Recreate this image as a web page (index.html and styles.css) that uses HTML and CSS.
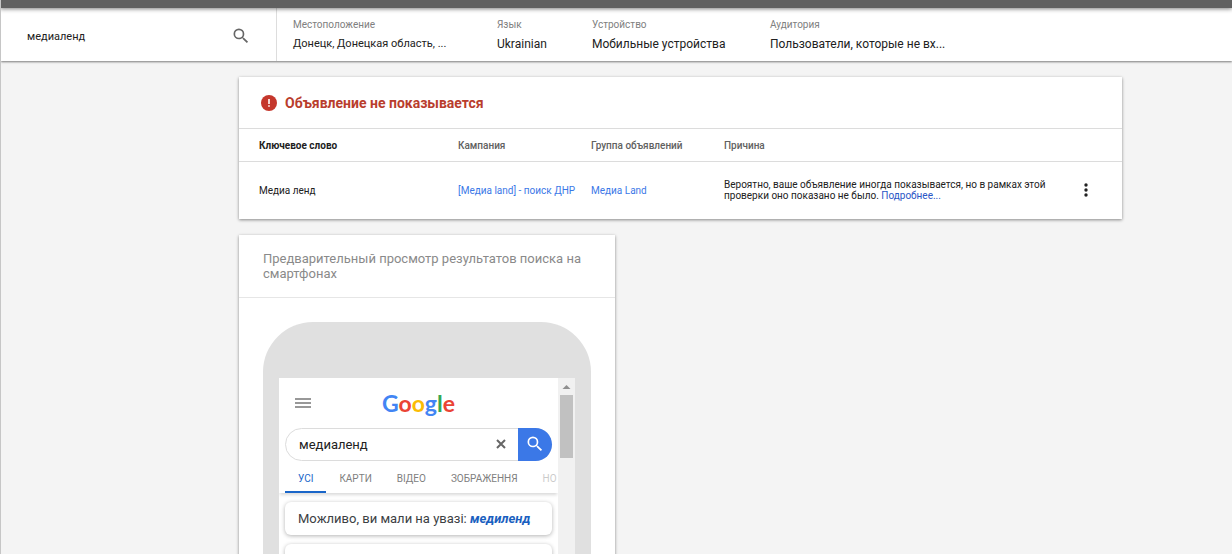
FILE: index.html
```html
<!DOCTYPE html>
<html lang="ru">
<head>
  <meta charset="UTF-8">
  <title>Предварительный просмотр и диагностика объявлений</title>
  <link rel="stylesheet" href="styles.css">
</head>
<body>
  <div class="topbar"></div>

  <header class="filters">
    <form class="query">
      <input class="query-input" type="text" value="медиаленд" aria-label="Поисковый запрос">
      <button class="icon-btn" type="button" aria-label="Найти">
        <svg viewBox="0 0 24 24" width="20" height="20"><path fill="#666" d="M15.5 14h-.79l-.28-.27A6.47 6.47 0 0 0 16 9.5 6.5 6.5 0 1 0 9.5 16c1.61 0 3.09-.59 4.23-1.57l.27.28v.79l5 4.99L20.49 19l-4.99-5zm-6 0a4.5 4.5 0 1 1 0-9 4.5 4.5 0 0 1 0 9z"/></svg>
      </button>
    </form>
    <dl class="params">
      <div class="param param-location">
        <dt>Местоположение</dt>
        <dd>Донецк, Донецкая область, ...</dd>
      </div>
      <div class="param param-lang">
        <dt>Язык</dt>
        <dd>Ukrainian</dd>
      </div>
      <div class="param param-device">
        <dt>Устройство</dt>
        <dd>Мобильные устройства</dd>
      </div>
      <div class="param param-audience">
        <dt>Аудитория</dt>
        <dd>Пользователи, которые не вх...</dd>
      </div>
    </dl>
  </header>

  <main class="content">
    <section class="card">
      <h2 class="status">
        <svg viewBox="0 0 16 16" width="16" height="16"><circle cx="8" cy="8" r="8" fill="#c5372c"/><path fill="#fff" d="M7.2 4h1.6v5H7.2zM7.2 10.2h1.6v1.6H7.2z"/></svg>
        Объявление не показывается
      </h2>
      <table class="results">
        <colgroup>
          <col class="col-keyword">
          <col class="col-campaign">
          <col class="col-group">
          <col class="col-reason">
          <col class="col-menu">
        </colgroup>
        <thead>
          <tr>
            <th class="sorted">Ключевое слово</th>
            <th>Кампания</th>
            <th>Группа объявлений</th>
            <th>Причина</th>
            <th></th>
          </tr>
        </thead>
        <tbody>
          <tr>
            <td>Медиа ленд</td>
            <td><a href="#">[Медиа land] - поиск ДНР</a></td>
            <td><a href="#">Медиа Land</a></td>
            <td>Вероятно, ваше объявление иногда показывается, но в рамках этой проверки оно показано не было. <a class="more" href="#">Подробнее...</a></td>
            <td>
              <button class="icon-btn" type="button" aria-label="Меню">
                <svg viewBox="0 0 20 20" width="20" height="20" fill="#222"><circle cx="10" cy="5" r="1.7"/><circle cx="10" cy="10" r="1.7"/><circle cx="10" cy="15" r="1.7"/></svg>
              </button>
            </td>
          </tr>
        </tbody>
      </table>
    </section>

    <section class="card preview">
      <h3 class="preview-title">Предварительный просмотр результатов поиска на смартфонах</h3>
      <div class="phone">
        <div class="screen">
          <div class="serp">
            <div class="serp-head">
              <button class="icon-btn menu" type="button" aria-label="Меню">
                <svg viewBox="0 0 16 12" width="16" height="12"><path stroke="#777" stroke-width="1.6" d="M0 2h16M0 6h16M0 10h16"/></svg>
              </button>
              <div class="logo"><span class="blue">G</span><span class="red">o</span><span class="yellow">o</span><span class="blue">g</span><span class="green">l</span><span class="red">e</span></div>
            </div>
            <form class="serp-search">
              <input class="serp-input" type="text" value="медиаленд" aria-label="Пошук">
              <button class="icon-btn clear" type="button" aria-label="Очистити">
                <svg viewBox="0 0 10 10" width="10" height="10"><path stroke="#666" stroke-width="2" d="M1 1l8 8M9 1l-8 8"/></svg>
              </button>
              <button class="icon-btn go" type="button" aria-label="Пошук">
                <svg viewBox="0 0 24 24" width="20" height="20"><path fill="#fff" d="M15.5 14h-.79l-.28-.27A6.47 6.47 0 0 0 16 9.5 6.5 6.5 0 1 0 9.5 16c1.61 0 3.09-.59 4.23-1.57l.27.28v.79l5 4.99L20.49 19l-4.99-5zm-6 0a4.5 4.5 0 1 1 0-9 4.5 4.5 0 0 1 0 9z"/></svg>
              </button>
            </form>
            <nav class="tabs">
              <a class="active" href="#">УСІ</a>
              <a href="#">КАРТИ</a>
              <a href="#">ВІДЕО</a>
              <a href="#">ЗОБРАЖЕННЯ</a>
              <a class="faded" href="#">НО</a>
            </nav>
            <div class="serp-card">Можливо, ви мали на увазі: <a href="#">медиленд</a></div>
            <div class="serp-card serp-result"></div>
          </div>
          <div class="scrollbar">
            <svg viewBox="0 0 17 17" width="17" height="17"><path fill="#8f8f8f" d="M4.500 11h8l-4-4z"/></svg>
            <div class="thumb"></div>
          </div>
        </div>
      </div>
    </section>
  </main>
</body>
</html>
```
FILE: styles.css
```css
* {
  box-sizing: border-box;
}

body {
  margin: 0;
  height: 100vh;
  overflow: hidden;
  background: #f4f4f4;
  border-left: 1px solid #c6c6c6;
  color: #212121;
  font-family: Roboto, "Liberation Sans", sans-serif;
  font-size: 10px;
}

a {
  color: #3b78e7;
  text-decoration: none;
}

svg {
  display: block;
}

input {
  border: 0;
  padding: 0;
  outline: 0;
  background: none;
  color: #212121;
  font-family: inherit;
  min-width: 0;
}

.icon-btn {
  display: flex;
  align-items: center;
  justify-content: center;
  border: 0;
  padding: 0;
  background: none;
}

/* top */
.topbar {
  height: 8px;
  margin-left: -1px;
  background: #616161;
  box-shadow: 0 1px 4px rgba(0, 0, 0, 0.5);
  position: relative;
}

.filters {
  display: flex;
  height: 53px;
  background: #fff;
  box-shadow: 0 1px 2px rgba(0, 0, 0, 0.5);
}

.query {
  display: flex;
  align-items: center;
  width: 276px;
  padding: 3px 25px 0 26px;
  border-right: 1px solid #ddd;
}

.query-input {
  flex: 1;
  font-size: 11px;
}

.params {
  display: flex;
  margin: 0;
  padding: 10px 0 0 16px;
  white-space: nowrap;
}

.param dt {
  color: #808080;
  font-size: 10px;
  line-height: 13px;
}

.param dd {
  margin: 4px 0 0;
  font-size: 12px;
  line-height: 18px;
}

.param-location {
  width: 204px;
}

.param-location dd {
  font-size: 11px;
}

.param-lang {
  width: 95px;
}

.param-device {
  width: 178px;
}

/* cards */
.content {
  padding: 16px 110px 0 238px;
}

.card {
  margin-bottom: 16px;
  background: #fff;
  box-shadow: 0 1px 3px rgba(0, 0, 0, 0.45);
}

.status {
  display: flex;
  align-items: center;
  gap: 8px;
  height: 51px;
  margin: 0;
  padding-left: 22px;
  color: #b93d2d;
  font-size: 14px;
  font-weight: 700;
}

.results {
  width: 100%;
  table-layout: fixed;
  border-collapse: collapse;
  line-height: 11px;
}

.results th,
.results td {
  padding: 0;
  border-top: 1px solid #dcdcdc;
  text-align: left;
}

.results th {
  height: 33px;
  color: #616161;
  font-weight: 500;
}

.results th.sorted {
  color: #212121;
  font-weight: 700;
}

.results td {
  height: 57px;
}

.results th:first-child,
.results td:first-child {
  padding-left: 20px;
}

.results .more {
  display: inline-block;
  color: #2a56c6;
}

.col-keyword {
  width: 219px;
}

.col-campaign,
.col-group {
  width: 133px;
}

.col-menu {
  width: 46px;
}

.results td:nth-child(4) {
  padding-right: 24px;
}

/* phone preview */
.preview {
  width: 376px;
}

.preview-title {
  margin: 0;
  padding: 16px 24px;
  border-bottom: 1px solid #e6e6e6;
  color: #8a8a8a;
  font-size: 13px;
  font-weight: 400;
  line-height: 15px;
}

.phone {
  margin: 24px;
  padding: 56px 16px;
  border-radius: 50px;
  background: #e0e0e0;
}

.screen {
  display: flex;
  height: 480px;
  background: #fff;
}

.serp {
  flex: 1;
  min-width: 0;
  overflow: hidden;
}

.serp-head {
  display: grid;
  grid-template-columns: 1fr auto 1fr;
  align-items: center;
  height: 50px;
}

.menu {
  width: 16px;
  margin-left: 16px;
}

.logo {
  font-family: Lato, Roboto, sans-serif;
  font-size: 23px;
  font-weight: 700;
  line-height: 28px;
}

.blue {
  color: #4285f4;
}

.red {
  color: #ea4335;
}

.yellow {
  color: #fbbc05;
}

.green {
  color: #34a853;
}

.serp-search {
  display: flex;
  height: 33px;
  margin: 0 6px;
  border: 1px solid #dcdcdc;
  border-radius: 17px;
}

.serp-input {
  flex: 1;
  padding-left: 13px;
  font-size: 13px;
}

.clear {
  width: 36px;
}

.go {
  width: 34px;
  margin: -1px;
  border-radius: 0 17px 17px 0;
  background: #3b78e7;
}

.tabs {
  display: flex;
  gap: 1px;
  height: 32px;
  padding-left: 6px;
  box-shadow: 0 3px 3px -1px rgba(0, 0, 0, 0.15);
}

.tabs a {
  padding: 0 12px;
  color: #808080;
  line-height: 36px;
}

.tabs .active {
  padding: 0 13px;
  border-bottom: 2px solid #1a66c9;
  color: #1a66c9;
}

.tabs .faded {
  padding-right: 0;
  opacity: 0.4;
}

.serp-card {
  height: 33px;
  margin: 9px 6px 8px;
  padding-left: 13px;
  border-radius: 6px;
  box-shadow: 0 1px 4px rgba(0, 0, 0, 0.3);
  color: #3c4043;
  font-size: 13px;
  line-height: 33px;
}

.serp-card a {
  color: #1a5fc0;
  font-style: italic;
  font-weight: 700;
}

.serp-result {
  height: 200px;
}

.scrollbar {
  width: 17px;
  background: #f1f1f1;
}

.thumb {
  height: 63px;
  margin: 0 2px;
  background: #c1c1c1;
}
```
